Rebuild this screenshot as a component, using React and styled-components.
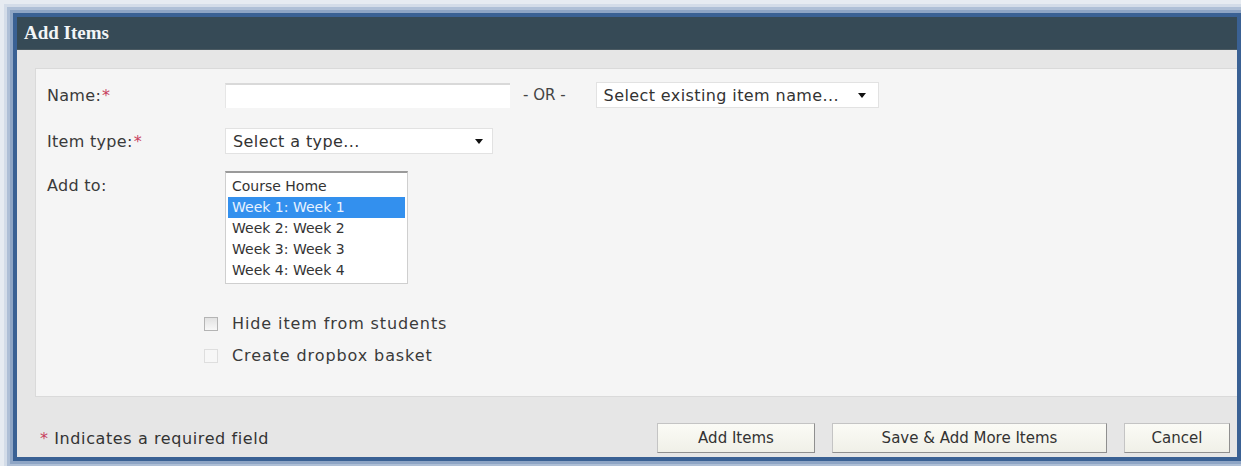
import React from 'react';
import styled, { createGlobalStyle } from 'styled-components';

const GlobalStyle = createGlobalStyle`
    body {
        margin: 0;
        background: #e6ebf1;
        font-family: "DejaVu Sans", Verdana, sans-serif;
        overflow: hidden;
    }
`;

const Frame = styled.div`
    width: 1241px;
    height: 466px;
    padding: 13px 0 0 13px;
    box-sizing: border-box;
`;

const Dialog = styled.div`
    width: 1228px;
    height: 448px;
    box-sizing: border-box;
    border: 4px solid #3a6194;
    box-shadow: 0 0 0 3px #8ea5c5, 0 0 0 6px #aebfd6, 0 0 0 9px #d3dce8;
    display: flex;
    flex-direction: column;
    background: #e6e6e6;
`;

const Header = styled.div`
    height: 33px;
    flex-shrink: 0;
    background: #364a56;
    border-bottom: 1px solid #4b5a62;
    box-sizing: border-box;
    display: flex;
    align-items: center;
    padding-left: 7px;
    color: #f2f5f7;
    font-family: "Liberation Serif", "Times New Roman", serif;
    font-weight: 700;
    font-size: 19px;
`;

const Body = styled.div`
    padding: 18px 0 0 18px;
    background: #e6e6e6;
`;

const Panel = styled.div`
    height: 329px;
    box-sizing: border-box;
    background: #f5f5f5;
    border: 1px solid #dadada;
    border-right: none;
    padding: 13px 0 0 11px;
    display: flex;
    flex-direction: column;
`;

const Row = styled.div`
    display: flex;
    align-items: ${p => (p.$top ? 'flex-start' : 'center')};
    margin-bottom: ${p => p.$gap || 0}px;
`;

const Label = styled.div`
    width: 178px;
    flex-shrink: 0;
    font-size: 16px;
    letter-spacing: 0.3px;
    color: #3a3a3a;
    padding-top: ${p => (p.$top ? 5 : 0)}px;
`;

const Req = styled.span`
    color: #c8405e;
    margin-left: 1px;
`;

const TextInput = styled.div`
    width: 285px;
    height: 25px;
    box-sizing: border-box;
    background: #fff;
    border-top: 2px solid #d9d9d9;
    border-left: 1px solid #e6e6e6;
`;

const OrText = styled.div`
    font-size: 15px;
    color: #444;
    margin: 0 30px 0 13px;
`;

const Select = styled.div`
    width: ${p => p.$w}px;
    height: 26px;
    box-sizing: border-box;
    background: #fff;
    border: 1px solid #e2e2e2;
    display: flex;
    align-items: center;
    justify-content: space-between;
    padding: 0 ${p => p.$pr}px 0 7px;
    font-size: 16px;
    letter-spacing: 0.4px;
    color: #333;
`;

const Arrow = styled.span`
    width: 0;
    height: 0;
    border-left: 4px solid transparent;
    border-right: 4px solid transparent;
    border-top: 5px solid #111;
`;

const ListBox = styled.div`
    width: 183px;
    height: 113px;
    box-sizing: border-box;
    background: #fff;
    border: 1px solid #cfcfcf;
    border-top: 2px solid #9a9a9a;
    padding: 3px 2px 0;
    overflow: hidden;
`;

const Option = styled.div`
    height: 21px;
    line-height: 21px;
    padding-left: 4px;
    font-size: 14px;
    color: ${p => (p.$selected ? '#e8f2ff' : '#333')};
    background: ${p => (p.$selected ? '#3390ee' : 'transparent')};
`;

const Checks = styled.div`
    margin: 30px 0 0 157px;
    display: flex;
    flex-direction: column;
    gap: 13px;
`;

const CheckRow = styled.label`
    display: flex;
    align-items: center;
    gap: 14px;
    font-size: 16px;
    letter-spacing: 0.9px;
    color: #3a3a3a;
`;

const Box = styled.span`
    width: 14px;
    height: 14px;
    box-sizing: border-box;
    border: 1px solid ${p => (p.$disabled ? '#dedede' : '#b4b4b4')};
    background: ${p => (p.$disabled ? '#f7f7f7' : 'linear-gradient(#e2e2e2, #f8f8f8)')};
`;

const Footer = styled.div`
    flex: 1;
    display: flex;
    align-items: flex-end;
    justify-content: space-between;
    padding: 0 7px 4px 22px;
    background: #e6e6e6;
`;

const Note = styled.div`
    font-size: 16px;
    letter-spacing: 0.6px;
    color: #333;
    margin-bottom: 5px;
`;

const Buttons = styled.div`
    display: flex;
    gap: 17px;
`;

const Button = styled.button`
    width: ${p => p.$w}px;
    height: 30px;
    font-family: "DejaVu Sans", Verdana, sans-serif;
    font-size: 15px;
    color: #333;
    background: linear-gradient(#fbfbf6, #f0f0e8);
    border: 1px solid #c4c4c4;
    border-right-color: #8f8f8f;
    border-bottom-color: #8f8f8f;
    padding: 0;
`;

const weeks = ['Course Home', 'Week 1: Week 1', 'Week 2: Week 2', 'Week 3: Week 3', 'Week 4: Week 4'];

export default function App() {
    return (
        <Frame>
            <GlobalStyle />
            <Dialog>
                <Header>Add Items</Header>
                <Body>
                    <Panel>
                        <Row $gap={20}>
                            <Label>Name:<Req>*</Req></Label>
                            <TextInput />
                            <OrText>- OR -</OrText>
                            <Select $w={283} $pr={12}>
                                Select existing item name...
                                <Arrow />
                            </Select>
                        </Row>
                        <Row $gap={17}>
                            <Label>Item type:<Req>*</Req></Label>
                            <Select $w={268} $pr={9}>
                                Select a type...
                                <Arrow />
                            </Select>
                        </Row>
                        <Row $top>
                            <Label $top>Add to:</Label>
                            <ListBox>
                                {weeks.map((w, i) => (
                                    <Option key={w} $selected={i === 1}>{w}</Option>
                                ))}
                            </ListBox>
                        </Row>
                        <Checks>
                            <CheckRow><Box />Hide item from students</CheckRow>
                            <CheckRow><Box $disabled />Create dropbox basket</CheckRow>
                        </Checks>
                    </Panel>
                </Body>
                <Footer>
                    <Note><Req>*</Req> Indicates a required field</Note>
                    <Buttons>
                        <Button $w={158}>Add Items</Button>
                        <Button $w={275}>Save &amp; Add More Items</Button>
                        <Button $w={106}>Cancel</Button>
                    </Buttons>
                </Footer>
            </Dialog>
        </Frame>
    );
}
